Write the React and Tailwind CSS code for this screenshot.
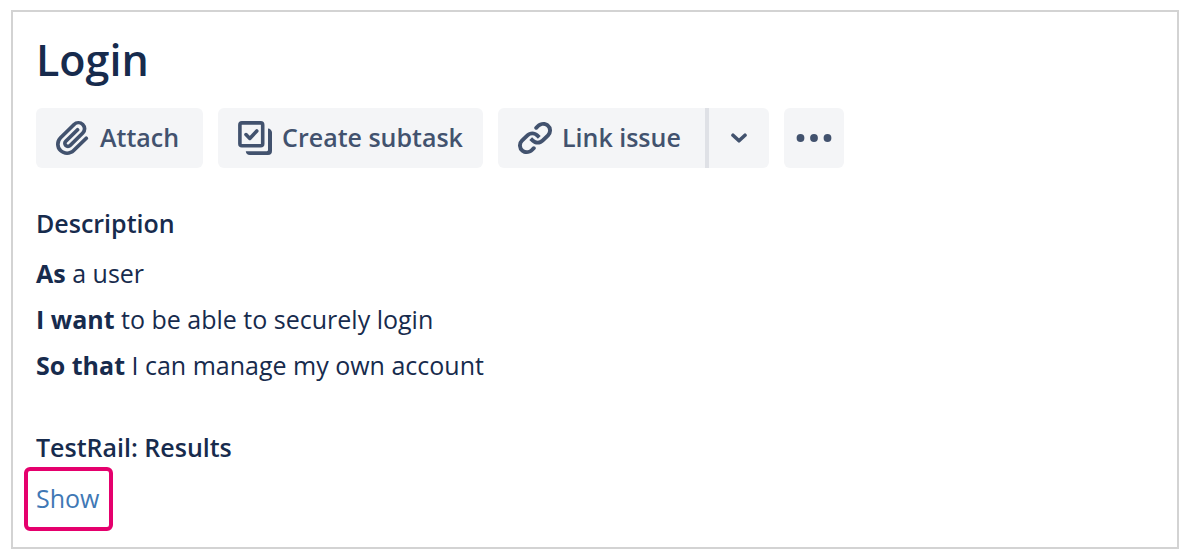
function AttachIcon() {
  return (
    <svg viewBox="3 3 18 18" className="h-[34px] w-[34px]" fill="currentColor" aria-hidden="true">
      <path d="M11.643 17.965c-1.53 1.495-4.016 1.496-5.542.004a3.773 3.773 0 01.002-5.412l7.147-6.985a2.316 2.316 0 013.233-.003c.893.873.895 2.282.004 3.153l-6.703 6.55a.653.653 0 01-.914-.008.62.62 0 010-.902l6.229-6.087a.941.941 0 000-1.353.995.995 0 00-1.384 0l-6.23 6.087a2.502 2.502 0 000 3.607 2.643 2.643 0 003.683.009l6.703-6.55a4.074 4.074 0 00-.003-5.859 4.306 4.306 0 00-6.002.003l-7.148 6.985a5.655 5.655 0 00-.001 8.118c2.29 2.239 6.015 2.238 8.31-.005l6.686-6.533a.941.941 0 000-1.353.995.995 0 00-1.384 0l-6.686 6.534z" />
    </svg>
  );
}

function SubtaskIcon() {
  return (
    <svg viewBox="0 0 34 34" className="h-[34px] w-[34px]" fill="none" stroke="currentColor" aria-hidden="true">
      <rect x="1.9" y="1.9" width="22.8" height="22.8" rx="2" strokeWidth="3.6" />
      <path d="M8 13.6l3.8 3.8 7-7.4" strokeWidth="3.6" strokeLinecap="round" strokeLinejoin="round" />
      <path d="M30 7.600c2 0 4 1.800 4 4V30a4 4 0 01-4 4H11.800c-2.200 0-4-1.600-4-3.700H28.800c.8 0 1.200-.4 1.200-1.200z" fill="currentColor" stroke="none" />
    </svg>
  );
}

function LinkIcon() {
  return (
    <svg viewBox="3 3.5 18 18" className="h-[34px] w-[34px]" fill="currentColor" aria-hidden="true">
      <path d="M12.856 5.457l-.937.92a1.002 1.002 0 000 1.437 1.047 1.047 0 001.463 0l.984-.966c.967-.95 2.542-1.135 3.602-.288a2.54 2.54 0 01.203 3.81l-2.903 2.852a2.646 2.646 0 01-3.696 0l-1.11-1.09L9 13.57l1.108 1.089c1.822 1.788 4.802 1.788 6.622 0l2.905-2.852a4.558 4.558 0 00-.357-6.82c-1.893-1.517-4.695-1.226-6.422.47" />
      <path d="M11.144 19.543l.937-.92a1.002 1.002 0 000-1.437 1.047 1.047 0 00-1.462 0l-.985.966c-.967.95-2.542 1.135-3.602.288a2.54 2.54 0 01-.203-3.81l2.903-2.852a2.646 2.646 0 013.696 0l1.11 1.09L15 11.43l-1.108-1.089c-1.822-1.788-4.802-1.788-6.622 0l-2.905 2.852a4.558 4.558 0 00.357 6.82c1.893 1.517 4.695 1.226 6.422-.47" />
    </svg>
  );
}

function ActionButton({ icon, label, className }) {
  return (
    <button
      type="button"
      className={`flex h-15 items-center gap-2.5 bg-[#f4f5f7] pl-5 text-[25px] font-semibold ${className}`}
    >
      {icon}
      {label}
    </button>
  );
}

function App() {
  return (
    <div className="bg-white py-2.5 pr-[13px] pl-[11px] font-['Open_Sans','Noto_Sans',sans-serif] text-[#172b4d]">
      <main className="border-2 border-[#d3d3d3] px-[23px] pt-[18px] pb-4">
        <h1 className="text-[43px] leading-[60px] font-semibold">Login</h1>

        {/* Toolbar */}
        <div className="mt-[18px] flex items-center gap-[15px] text-[#42526e]">
          <ActionButton icon={<AttachIcon />} label="Attach" className="rounded-md pr-6" />
          <ActionButton icon={<SubtaskIcon />} label="Create subtask" className="rounded-md pr-5" />
          <div className="flex">
            <ActionButton icon={<LinkIcon />} label="Link issue" className="rounded-l-md pr-6" />
            <button
              type="button"
              aria-label="More link options"
              className="flex h-15 w-16 items-center justify-center rounded-r-md border-l-4 border-[#dfe1e6] bg-[#f4f5f7]"
            >
              <svg viewBox="0 0 16 10" className="h-2.5 w-4" fill="none" stroke="currentColor" aria-hidden="true">
                <path d="M2 2.200l6 5.600 6-5.600" strokeWidth="3.600" strokeLinecap="round" strokeLinejoin="round" />
              </svg>
            </button>
          </div>
          <button
            type="button"
            aria-label="More actions"
            className="flex h-15 w-15 items-center justify-center rounded-md bg-[#f4f5f7]"
          >
            <svg viewBox="0 0 36 8" className="h-2 w-9" fill="currentColor" aria-hidden="true">
              <circle cx="4.500" cy="4" r="3.900" />
              <circle cx="18" cy="4" r="3.900" />
              <circle cx="31.500" cy="4" r="3.900" />
            </svg>
          </button>
        </div>

        {/* Description */}
        <section className="mt-9">
          <h2 className="text-[25px] leading-[38px] font-semibold">Description</h2>
          <div className="mt-2 text-[25px] leading-[46px]">
            <p><strong>As</strong> a user</p>
            <p><strong>I want</strong> to be able to securely login</p>
            <p><strong>So that</strong> I can manage my own account</p>
          </div>
        </section>

        {/* Test results */}
        <section className="mt-10">
          <h2 className="text-[25px] leading-[38px] font-semibold">TestRail: Results</h2>
          <a
            href="#results"
            className="-ml-3 mt-px inline-flex h-16 items-center rounded-md border-4 border-[#e5006d] px-2 pr-2.5 text-[25px] text-[#4078b5]"
          >
            Show
          </a>
        </section>
      </main>
    </div>
  );
}

export default App;
